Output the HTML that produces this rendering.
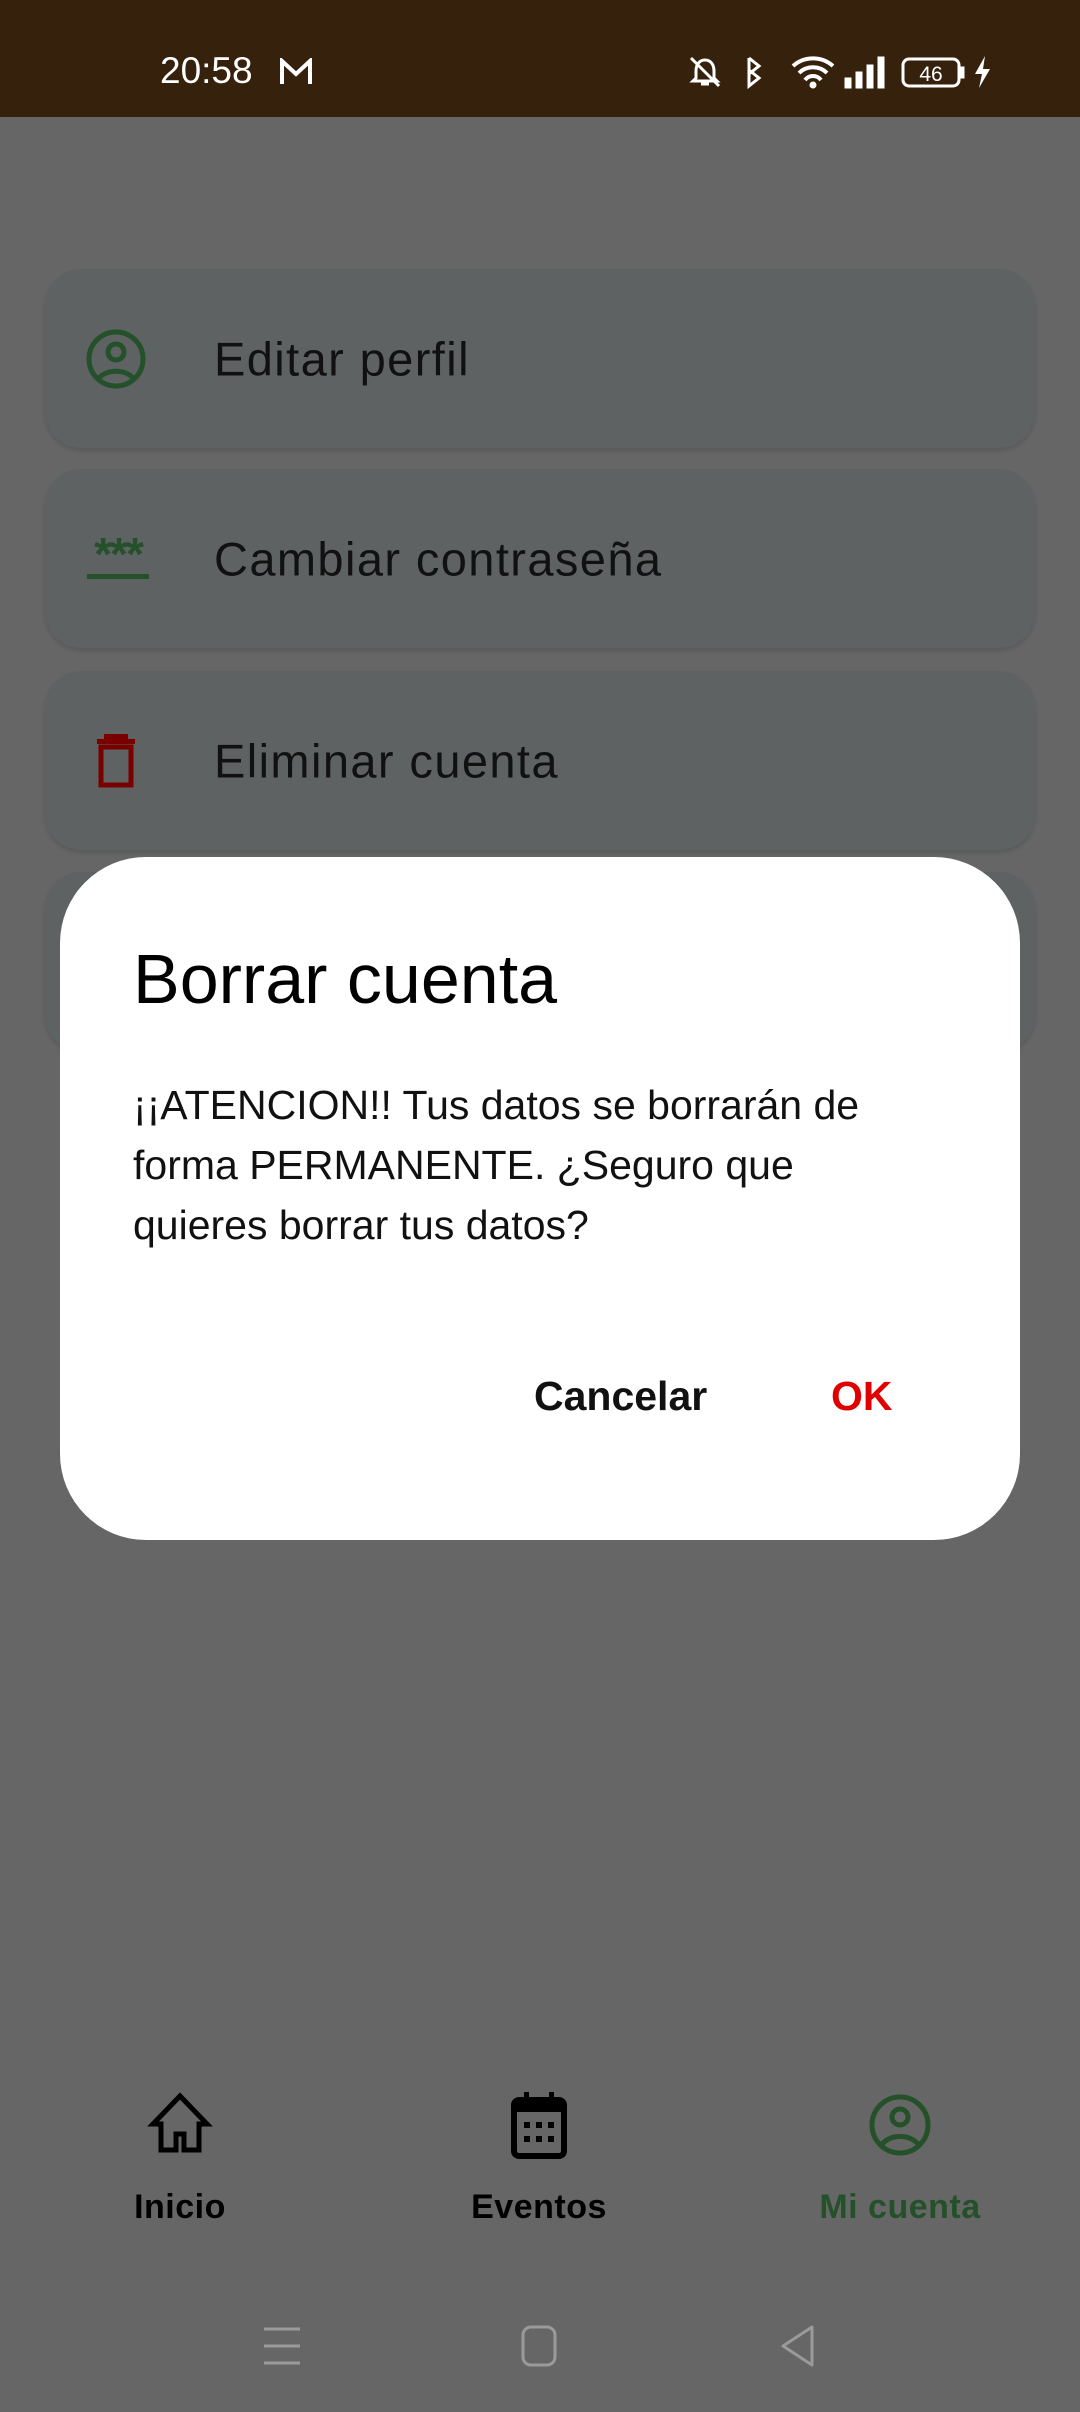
<!DOCTYPE html>
<html><head><meta charset="utf-8"><style>
*{margin:0;padding:0;box-sizing:border-box}
body{width:1080px;height:2412px;background:#666666;position:relative;overflow:hidden;font-family:"Liberation Sans",sans-serif}
.sb{position:absolute;left:0;top:0;width:1080px;height:117px;background:#36220c;color:#fff}
.card{position:absolute;left:45px;width:990px;height:179px;background:#5e6262;border-radius:36px;box-shadow:0 3px 4px rgba(0,0,0,.12)}
.card span{position:absolute;left:169px;top:50%;transform:translateY(-50%);font-size:47px;color:#111;letter-spacing:1.4px}
.card svg{position:absolute;left:40px;top:50%;transform:translateY(-50%)}
.dlg{position:absolute;left:60px;top:857px;width:960px;height:683px;background:#fff;border-radius:86px}
.nav{position:absolute;top:2090px;width:300px;text-align:center;font-size:34px;font-weight:bold;letter-spacing:.5px}
.nav svg{display:block;margin:0 auto 28px}
</style></head><body>
<div class="sb">
<div style="position:absolute;left:160px;top:50px;font-size:37px">20:58</div>
<svg style="position:absolute;left:279px;top:58px" width="34" height="28" viewBox="0 0 34 28"><path d="M3 26V3l14 13L31 3v23" fill="none" stroke="#fff" stroke-width="4"/></svg>
<svg style="position:absolute;left:685px;top:54px" width="310" height="36" viewBox="0 0 310 36" fill="#fff" stroke="#fff">
<path d="M20 6c-6 0-9 5-9 11v7l-3 3h24l-3-3v-7c0-6-3-11-9-11zM16 30h8" fill="none" stroke-width="3"/><path d="M6 4l28 28" stroke-width="3"/>
<path d="M64 4l10 8-10 8V4v28l10-8-10-8" fill="none" stroke-width="3"/>
<path d="M108 12a30 30 0 0 1 40 0M114 19a20 20 0 0 1 28 0M120 26a10 10 0 0 1 16 0" fill="none" stroke-width="4"/><circle cx="128" cy="31" r="3"/>
<rect x="160" y="24" width="6" height="10"/><rect x="171" y="18" width="6" height="16"/><rect x="182" y="11" width="6" height="23"/><rect x="193" y="3" width="6" height="31"/>
<rect x="218" y="5" width="56" height="27" rx="6" fill="none" stroke-width="3"/><rect x="276" y="13" width="3" height="11"/>
<text x="246" y="27" font-size="21" text-anchor="middle" stroke="none" font-family="Liberation Sans">46</text>
<path d="M300 2l-10 18h7l-3 14 11-19h-7z" stroke="none"/>
</svg>
</div>
<div class="card" style="top:269px"><svg width="62" height="62" viewBox="0 0 62 62"><circle cx="31" cy="31" r="27" fill="none" stroke="#24502a" stroke-width="5"/><circle cx="31" cy="24" r="8" fill="none" stroke="#24502a" stroke-width="5"/><path d="M14 50c8-9 26-9 34 0" fill="none" stroke="#24502a" stroke-width="5"/></svg><span>Editar perfil</span></div>
<div class="card" style="top:469px"><svg width="66" height="50" viewBox="0 0 66 50"><text x="33" y="36" font-size="46" font-weight="bold" fill="#24502a" text-anchor="middle" font-family="Liberation Sans" letter-spacing="-2">***</text><rect x="2" y="40" width="62" height="5" fill="#24502a"/></svg><span>Cambiar contraseña</span></div>
<div class="card" style="top:671px"><svg width="62" height="62" viewBox="0 0 62 62"><rect x="19" y="4" width="24" height="6" fill="#7a0000"/><rect x="12" y="9" width="38" height="5" fill="#7a0000"/><rect x="16" y="17" width="30" height="38" fill="none" stroke="#7a0000" stroke-width="5"/></svg><span>Eliminar cuenta</span></div>
<div class="card" style="top:872px"></div>
<div class="dlg">
<div style="position:absolute;left:73px;top:82px;font-size:70px;color:#000">Borrar cuenta</div>
<div style="position:absolute;left:73px;top:218px;width:790px;font-size:41px;line-height:60px;color:#111">¡¡ATENCION!! Tus datos se borrarán de forma PERMANENTE. ¿Seguro que quieres borrar tus datos?</div>
<div style="position:absolute;left:474px;top:516px;font-size:41px;font-weight:bold;color:#111">Cancelar</div>
<div style="position:absolute;left:771px;top:516px;font-size:41px;font-weight:bold;color:#e00000">OK</div>
</div>
<div class="nav" style="left:30px"><svg width="70" height="70" viewBox="0 0 70 70"><path d="M35 6L8 34h8v26h15V44h8v16h15V34h8z" fill="none" stroke="#000" stroke-width="5"/></svg><span style="color:#000">Inicio</span></div>
<div class="nav" style="left:389px"><svg width="70" height="70" viewBox="0 0 70 70"><rect x="10" y="10" width="50" height="56" rx="5" fill="none" stroke="#000" stroke-width="6"/><rect x="10" y="10" width="50" height="12" fill="#000"/><rect x="20" y="2" width="5" height="12"/><rect x="45" y="2" width="5" height="12"/><g fill="#000"><rect x="20" y="32" width="6" height="6"/><rect x="32" y="32" width="6" height="6"/><rect x="44" y="32" width="6" height="6"/><rect x="20" y="46" width="6" height="6"/><rect x="32" y="46" width="6" height="6"/><rect x="44" y="46" width="6" height="6"/></g></svg><span style="color:#000">Eventos</span></div>
<div class="nav" style="left:750px"><svg width="70" height="70" viewBox="0 0 70 70"><circle cx="35" cy="35" r="28" fill="none" stroke="#24502a" stroke-width="5"/><circle cx="35" cy="27" r="8" fill="none" stroke="#24502a" stroke-width="5"/><path d="M17 54c9-10 27-10 36 0" fill="none" stroke="#24502a" stroke-width="5"/></svg><span style="color:#24502a">Mi cuenta</span></div>
<svg style="position:absolute;left:262px;top:2326px" width="40" height="40" viewBox="0 0 40 40"><path d="M2 3h36M2 20h36M2 37h36" stroke="#9a9a9a" stroke-width="3"/></svg>
<svg style="position:absolute;left:520px;top:2324px" width="38" height="44" viewBox="0 0 38 44"><rect x="3" y="3" width="32" height="38" rx="8" fill="none" stroke="#9a9a9a" stroke-width="3"/></svg>
<svg style="position:absolute;left:778px;top:2324px" width="38" height="44" viewBox="0 0 38 44"><path d="M34 3L5 22l29 19z" fill="none" stroke="#9a9a9a" stroke-width="3" stroke-linejoin="round"/></svg>
</body></html>
